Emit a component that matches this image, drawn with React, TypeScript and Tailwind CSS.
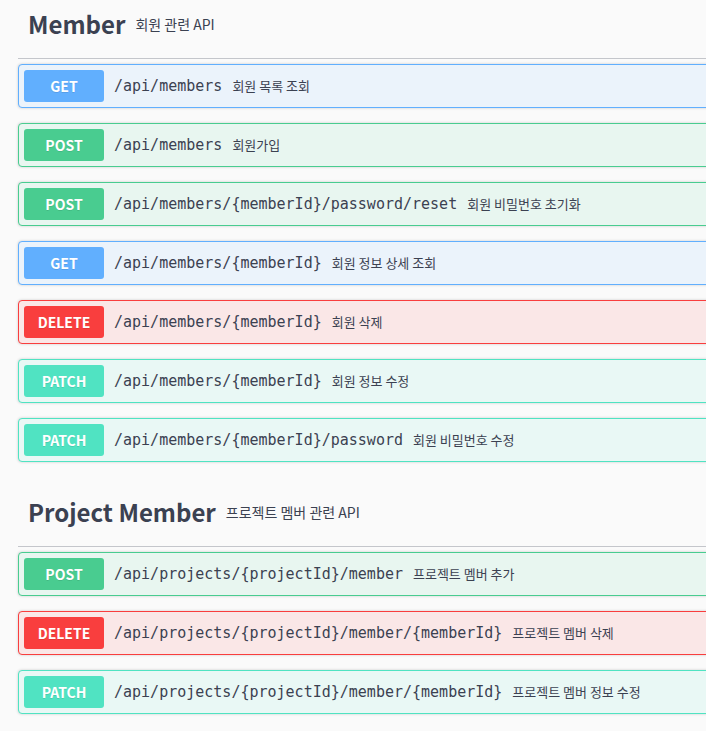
import React from 'react';

type Method = 'GET' | 'POST' | 'DELETE' | 'PATCH';

const METHOD_STYLE: Record<Method, { block: string; badge: string }> = {
  GET: { block: 'bg-[#ebf3fb] border-[#61affe]', badge: 'bg-[#61affe]' },
  POST: { block: 'bg-[#e8f6f0] border-[#49cc90]', badge: 'bg-[#49cc90]' },
  DELETE: { block: 'bg-[#fae7e7] border-[#f93e3e]', badge: 'bg-[#f93e3e]' },
  PATCH: { block: 'bg-[#e9f8f5] border-[#50e3c2]', badge: 'bg-[#50e3c2]' },
};

interface Op {
  method: Method;
  path: string;
  summary: string;
}

interface Tag {
  name: string;
  description: string;
  ops: Op[];
}

const TAGS: Tag[] = [
  {
    name: 'Member',
    description: '회원 관련 API',
    ops: [
      { method: 'GET', path: '/api/members', summary: '회원 목록 조회' },
      { method: 'POST', path: '/api/members', summary: '회원가입' },
      { method: 'POST', path: '/api/members/{memberId}/password/reset', summary: '회원 비밀번호 초기화' },
      { method: 'GET', path: '/api/members/{memberId}', summary: '회원 정보 상세 조회' },
      { method: 'DELETE', path: '/api/members/{memberId}', summary: '회원 삭제' },
      { method: 'PATCH', path: '/api/members/{memberId}', summary: '회원 정보 수정' },
      { method: 'PATCH', path: '/api/members/{memberId}/password', summary: '회원 비밀번호 수정' },
    ],
  },
  {
    name: 'Project Member',
    description: '프로젝트 멤버 관련 API',
    ops: [
      { method: 'POST', path: '/api/projects/{projectId}/member', summary: '프로젝트 멤버 추가' },
      { method: 'DELETE', path: '/api/projects/{projectId}/member/{memberId}', summary: '프로젝트 멤버 삭제' },
      { method: 'PATCH', path: '/api/projects/{projectId}/member/{memberId}', summary: '프로젝트 멤버 정보 수정' },
    ],
  },
];

const sans = "font-['Noto_Sans_CJK_KR',sans-serif]";

const OpBlock: React.FC<{ op: Op }> = ({ op }) => {
  const s = METHOD_STYLE[op.method];
  return (
    <div
      className={`mb-[15px] w-[720px] h-[44px] border rounded-[4px] shadow-[0_0_3px_rgba(0,0,0,0.19)] flex items-center px-[5px] ${s.block}`}
    >
      <span
        className={`w-[80px] h-[32px] rounded-[3px] flex items-center justify-center text-white text-[14px] font-bold [text-shadow:0_1px_0_rgba(0,0,0,0.1)] ${sans} ${s.badge}`}
      >
        {op.method}
      </span>
      <span className="ml-[10px] text-[15px] text-[#3b4151] font-['DejaVu_Sans_Mono','Noto_Sans_CJK_KR',monospace]">
        {op.path}
      </span>
      <span className={`ml-[10px] text-[13px] text-[#3b4151] ${sans}`}>{op.summary}</span>
    </div>
  );
};

export default function App() {
  return (
    <div className="w-[706px] h-[731px] overflow-hidden bg-[#fafafa] pl-[18px]">
      {TAGS.map((tag, i) => (
        <section key={tag.name} className={i > 0 ? 'pt-[11px]' : ''}>
          <h3
            className={`h-[59px] border-b border-[#c4c6cb] mb-[5px] pl-[10px] pb-[10px] flex items-center text-[#3b4151] ${sans}`}
          >
            <span className="text-[24px] font-bold">{tag.name}</span>
            <span className="ml-[10px] text-[14px] font-normal">{tag.description}</span>
          </h3>
          {tag.ops.map((op, j) => (
            <OpBlock key={j} op={op} />
          ))}
        </section>
      ))}
    </div>
  );
}
